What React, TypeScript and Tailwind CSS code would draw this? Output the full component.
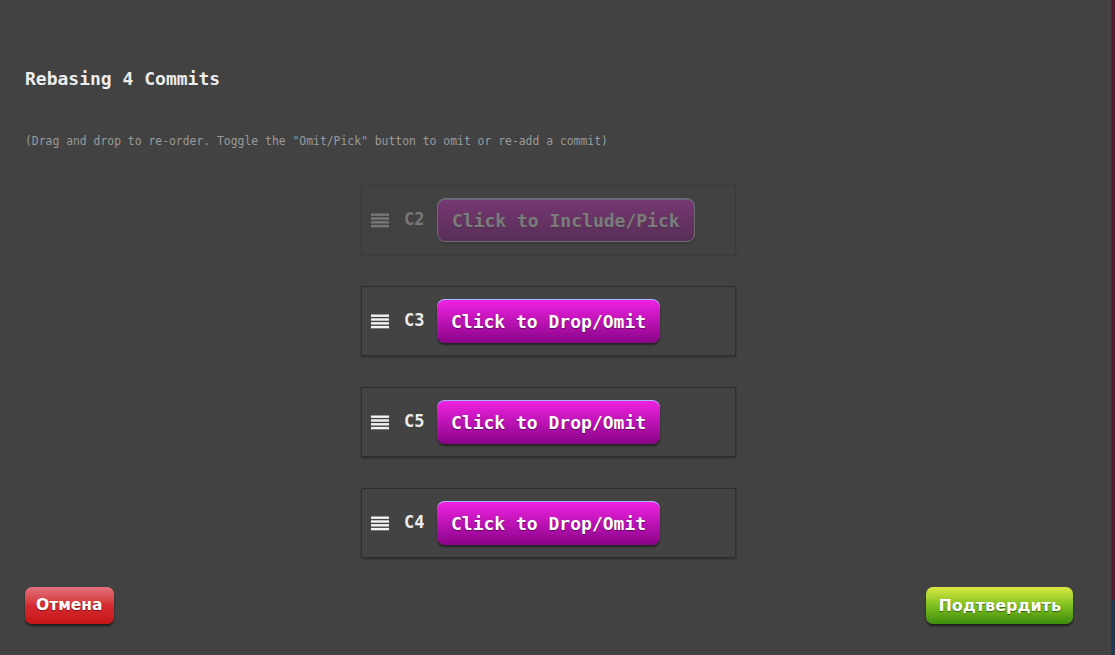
import React from 'react';

type Commit = { id: string; omitted: boolean };

const commits: Commit[] = [
  { id: 'C2', omitted: true },
  { id: 'C3', omitted: false },
  { id: 'C5', omitted: false },
  { id: 'C4', omitted: false },
];

const mono = { fontFamily: '"DejaVu Sans Mono", "Liberation Mono", monospace' };
const sans = { fontFamily: '"DejaVu Sans", "Noto Sans", sans-serif' };

function Handle() {
  return (
    <svg width="18" height="15" viewBox="0 0 18 15" className="shrink-0">
      <rect x="0" y="0.5" width="18" height="2.4" fill="currentColor" />
      <rect x="0" y="4.3" width="18" height="2.4" fill="currentColor" />
      <rect x="0" y="8.1" width="18" height="2.4" fill="currentColor" />
      <rect x="0" y="11.9" width="18" height="2.4" fill="currentColor" />
    </svg>
  );
}

function CommitRow({ commit }: { commit: Commit }) {
  return (
    <div
      className={`flex h-[70px] w-[375px] items-center border border-[#2e2e2e] bg-[#434343] pl-[9px] shadow-[0_1px_2px_rgba(0,0,0,0.35)] ${
        commit.omitted ? 'opacity-30' : ''
      }`}
    >
      <div className="text-[#f2f2f2]">
        <Handle />
      </div>
      <span className="ml-[15px] w-[22px] text-[17px] font-bold text-[#ededed]" style={mono}>
        {commit.id}
      </span>
      <button
        className={`ml-[11px] h-[44px] rounded-[8px] bg-gradient-to-b from-[#f222e4] to-[#8a0488] px-[14px] text-[18px] font-bold text-white shadow-[0_2px_2px_rgba(0,0,0,0.5),inset_0_1px_0_rgba(150,220,255,0.8)] [text-shadow:0_1px_1px_rgba(0,0,0,0.45)] ${
          commit.omitted ? 'border border-[#d8d8d8]' : ''
        }`}
        style={mono}
      >
        {commit.omitted ? 'Click to Include/Pick' : 'Click to Drop/Omit'}
      </button>
    </div>
  );
}

export default function App() {
  return (
    <div className="flex h-[655px] w-full overflow-hidden bg-[#424242]">
      <div className="flex flex-1 flex-col px-[25px] pt-[67px]">
        <h1 className="text-[18px] font-bold leading-[24px] text-[#ececec]" style={mono}>
          Rebasing 4 Commits
        </h1>
        <p className="mt-[42px] text-[11.4px] leading-[16px] text-[#9a9a9a]" style={mono}>
          (Drag and drop to re-order. Toggle the "Omit/Pick" button to omit or re-add a commit)
        </p>
        <div className="mt-[36px] flex flex-col gap-[31px] pl-[336px]">
          {commits.map((c) => (
            <CommitRow key={c.id} commit={c} />
          ))}
        </div>
        <div className="mt-[29px] flex items-start justify-between pr-[13px]">
          <button
            className="h-[37px] rounded-[7px] bg-gradient-to-b from-[#e2707c] via-[#d52a30] to-[#c51515] px-[11px] text-[15.5px] font-bold text-white shadow-[0_2px_2px_rgba(0,0,0,0.55)] [text-shadow:0_1px_1px_rgba(0,0,0,0.4)]"
            style={sans}
          >
            Отмена
          </button>
          <button
            className="h-[37px] rounded-[7px] bg-gradient-to-b from-[#dbe840] via-[#7ec020] to-[#3e8d0c] px-[12px] text-[16px] font-bold text-white shadow-[0_2px_2px_rgba(0,0,0,0.55)] [text-shadow:0_1px_1px_rgba(0,0,0,0.45)]"
            style={sans}
          >
            Подтвердить
          </button>
        </div>
      </div>
      <div className="flex w-[4px] flex-col border-l border-[#3a3333]">
        <div className="h-[600px] bg-[#581a32]" />
        <div className="flex-1 bg-[#1c3a52]" />
      </div>
    </div>
  );
}
